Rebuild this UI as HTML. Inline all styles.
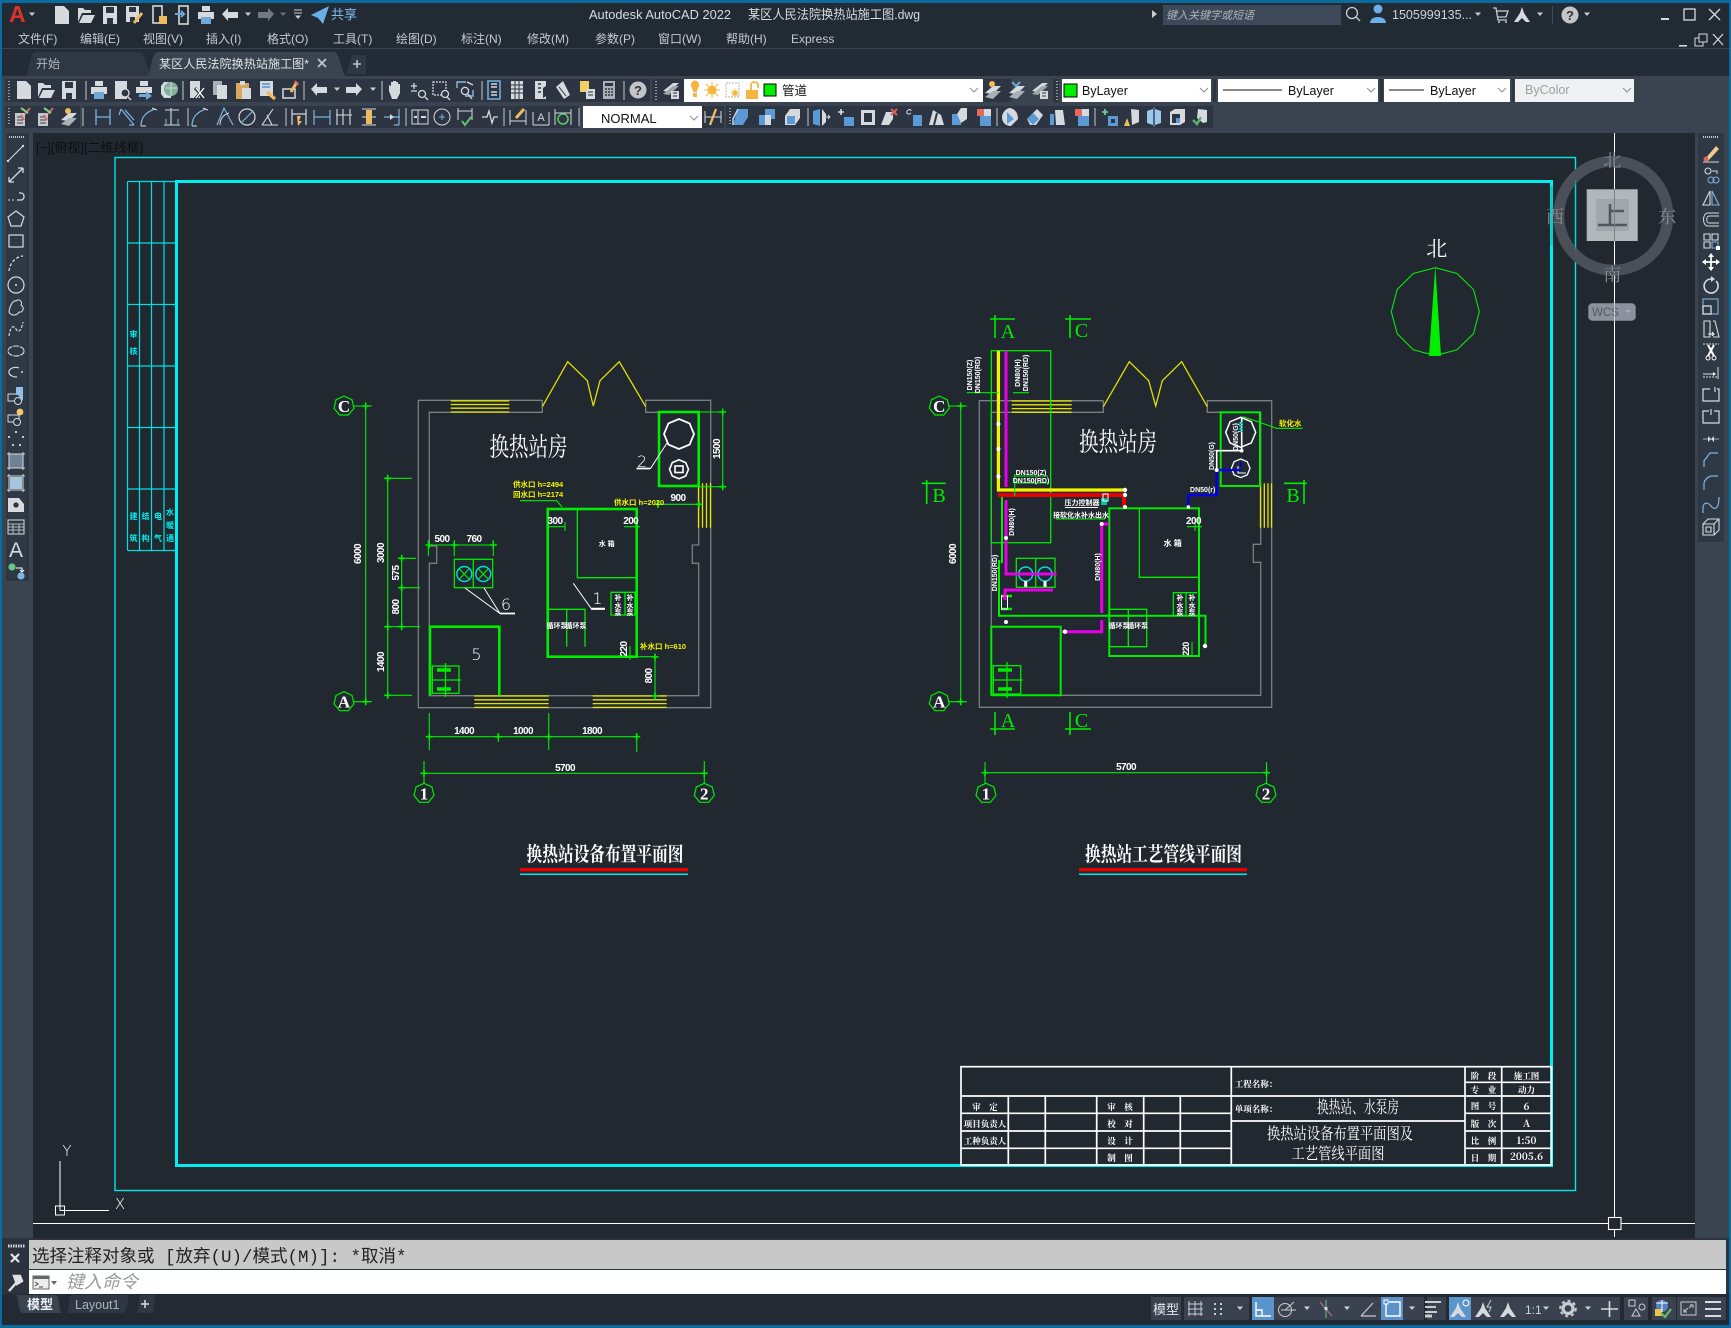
<!DOCTYPE html>
<html lang="zh"><head><meta charset="utf-8"><title>AutoCAD 2022</title>
<style>
html,body{margin:0;padding:0;background:#212830;overflow:hidden}
svg{display:block}
text{font-family:"Liberation Sans","Noto Sans CJK SC",sans-serif}
.m{font-size:12px;fill:#c6cacf}
.d{font-size:10px;fill:#fff;text-anchor:middle;font-weight:bold;letter-spacing:-.6px}
.s{font-size:7px;fill:#fff;text-anchor:middle;font-weight:bold}
.y{font-size:7.5px;fill:#f4f400;font-weight:bold}
.h{fill:#fff;text-anchor:middle;font-family:"Noto Serif CJK SC","Noto Sans CJK SC",serif;font-weight:400}
.t{font-size:8.5px;fill:#fff;text-anchor:middle;font-weight:bold;font-family:"Noto Serif CJK SC",serif}
.c{font-size:17px;fill:#fff;text-anchor:middle;font-family:"Liberation Serif",serif;font-weight:bold}
.n{font-size:16px;fill:#fff;text-anchor:middle;font-family:"DejaVu Sans",sans-serif;font-weight:200}
.u{font-size:15px;fill:#fff;text-anchor:middle;font-family:"DejaVu Sans",sans-serif;font-weight:200}
.g{fill:none;stroke:#00ec00}
.w{fill:none;stroke:#7c7f82;stroke-width:1.3}
</style></head><body>
<svg xmlns="http://www.w3.org/2000/svg" width="1731" height="1328" viewBox="0 0 1731 1328">
<defs>
<path id="tk" d="M-3.5 0H3.5M0-3.5V3.5" stroke="#00ec00" stroke-width="1.6" fill="none"/>
<polygon id="bub" points="0,-10 8,-6.2 10,2.2 4.4,9 -4.4,9 -10,2.2 -8,-6.2" fill="none" stroke="#00ec00" stroke-width="1.2"/>
<path id="dd" d="M-3-1.5H3L0 2Z" fill="#c9cdd2"/>
<path id="chev" d="M-4-2L0 2L4-2" fill="none" stroke="#8b8f94"/>
<g id="new"><path d="M-7-9H2L7-4V9H-7Z" fill="#d6dade"/></g>
<g id="open"><path d="M-8 7V-7H-3L-1-5H5V-2H-4L-8 7ZM-7 8L-3 0H9L5 8Z" fill="#d6dade"/></g>
<g id="save"><path d="M-7-9H7V9H-7Z" fill="#d6dade"/><path d="M-4-8H4V-2H-4ZM-3 3H3V9H-3Z" fill="#2c3541"/></g>
<g id="saveas"><path d="M-7-9H6V7H-7Z" fill="#d6dade"/><path d="M-4-8H3V-3H-4ZM-3 2H2V7H-3Z" fill="#2c3541"/><path d="M1 8L9-2" stroke="#eebc5c" stroke-width="3"/></g>
<g id="print"><path d="M-4-9H4V-4H-4ZM-8-3H8V4H-8Z" fill="#d6dade"/><rect x="-5" y="2" width="10" height="7" fill="#6ea9d9"/></g>
<g id="phone"><rect x="-5" y="-9" width="9" height="17" fill="none" stroke="#d6dade" stroke-width="1.6"/><rect x="1" y="1" width="8" height="8" fill="#eebc5c"/></g>
<g id="upl"><rect x="-4" y="-9" width="9" height="18" fill="none" stroke="#d6dade" stroke-width="1.6"/><path d="M-8-1H1M-2-4L1-1L-2 2" stroke="#6ea9d9" stroke-width="2" fill="none"/></g>
<g id="undo"><path d="M-8-1L-2-7V-3H8V3H-2V6Z" fill="#d6dade"/></g>
<g id="redo"><path d="M8-1L2-7V-3H-8V3H2V6Z" fill="#d6dade"/></g>
<g id="prev"><path d="M-7-9H5V9H-7Z" fill="#d6dade"/><circle cx="3" cy="3" r="4" fill="#2c3541" stroke="#d6dade" stroke-width="1.3"/><path d="M5 6L9 10" stroke="#d6dade" stroke-width="1.4"/></g>
<g id="plot"><path d="M-4-9H4V-4H-4ZM-8-3H8V3H-8Z" fill="#d6dade"/><path d="M-5 4H2V1L8 6L2 10V7H-5Z" fill="#6ea9d9"/></g>
<g id="globe"><path d="M-5-8H2V8H-5L-8 4V-4Z" fill="#d6dade"/><circle cx="2" cy="-1" r="7" fill="#7fb09b"/><path d="M-3-2H8M2-8V6" stroke="#d6dade"/></g>
<g id="cut"><path d="M-7-9H3V8H-7Z" fill="#d6dade"/><path d="M-2-2L8 9M8-2L-2 9" stroke="#2c3541" stroke-width="3"/><path d="M-1-2L7 8M7-2L-1 8" stroke="#fff" stroke-width="1.3"/></g>
<g id="copy"><path d="M-7-9H2V5H-7Z" fill="#aab0b6"/><path d="M-3-5H7V9H-3Z" fill="#d6dade"/></g>
<g id="paste"><path d="M-7-7H6V9H-7Z" fill="#d6a85c"/><rect x="-3" y="-9" width="5" height="4" fill="#d6dade"/><path d="M-1-2H8V9H-1Z" fill="#d6dade"/></g>
<g id="match"><path d="M-7-9H6V6H-7Z" fill="#d6dade"/><path d="M-5-6H3M-5-3H3" stroke="#6ea9d9" stroke-width="2"/><path d="M0 2L8 9" stroke="#eebc5c" stroke-width="3.4"/></g>
<g id="block"><path d="M-7-1H5V8H-7Z" fill="none" stroke="#d6dade" stroke-width="1.5"/><path d="M1 2L7-8" stroke="#eebc5c" stroke-width="3"/><path d="M5-9L8-5" stroke="#e96a6a" stroke-width="2"/></g>
<g id="pan"><path d="M-6 1V-5L-4-4V-8H-2V-3V-9H1V-3V-8H3V-3V-6H5V3L2 9H-3Z" fill="#d6dade"/></g>
<g id="zr"><path d="M-8-4H-2M-5-7V-1M-8 1H-2" stroke="#d6dade" stroke-width="1.3" fill="none"/><circle cx="3" cy="4" r="3.5" fill="none" stroke="#d6dade" stroke-width="1.3"/><path d="M6 7L9 10" stroke="#d6dade" stroke-width="1.3"/></g>
<g id="zw"><path d="M-8-8H5V5H-8Z" fill="none" stroke="#d6dade" stroke-dasharray="2 1" stroke-width="1.3"/><circle cx="4" cy="4" r="3.5" fill="#2c3541" stroke="#d6dade" stroke-width="1.3"/><path d="M6 7L9 10" stroke="#d6dade" stroke-width="1.3"/></g>
<g id="zp"><path d="M-8-2V-8H1M8 0V6H0" fill="none" stroke="#8fb9dd" stroke-width="1.4"/><circle cx="0" cy="1" r="3.6" fill="none" stroke="#d6dade" stroke-width="1.3"/><path d="M3 4L7 9" stroke="#d6dade" stroke-width="1.3"/><path d="M2-8L8-5" stroke="#d6dade" stroke-width="1.3"/></g>
<g id="props"><rect x="-6" y="-9" width="12" height="18" fill="none" stroke="#6ea9d9" stroke-width="1.6"/><path d="M-3-6H3M-3-3H3M-3 2H3M-3 5H3" stroke="#d6dade" stroke-width="1.5"/></g>
<g id="grid3"><path d="M-6-9H6V9H-6Z" fill="#d6dade"/><path d="M-2-9V9M2-9V9M-6-5H6M-6-1H6M-6 3H6" stroke="#2c3541"/></g>
<g id="tp"><path d="M-6-9H5V9H-6Z" fill="#d6dade"/><path d="M-3-6H0M-3-2H0M-3 2H0" stroke="#2c3541" stroke-width="1.6"/><path d="M2-2L8-6L7 5L2 8Z" fill="#2c3541"/></g>
<g id="sheet"><path d="M-7-3L0-9L7 5L1 9Z" fill="#d6dade"/><path d="M-4-3L3 6" stroke="#2c3541"/></g>
<g id="mk"><rect x="-7" y="-9" width="9" height="11" fill="#f0cf63"/><rect x="-1" y="-1" width="9" height="10" fill="#d6dade"/><path d="M1 2H6M1 5H6" stroke="#2c3541"/></g>
<g id="calc"><rect x="-6" y="-9" width="12" height="18" fill="#aab0b6"/><rect x="-4" y="-7" width="8" height="3" fill="#2c3541"/><path d="M-4-1H4M-4 2H4M-4 5H4" stroke="#2c3541" stroke-width="1.6" stroke-dasharray="2 1"/></g>
<g id="help"><circle r="8.5" fill="#c2c6ca"/><text x="0" y="5" font-size="13" font-weight="bold" text-anchor="middle" fill="#333">?</text></g>
<g id="lay"><path d="M-8 1L2-7L8-7L-2 2Z" fill="#d6dade"/><path d="M-8 4L2-4L8-4L-2 5Z" fill="#9fa5ab"/><rect x="0" y="1" width="8" height="8" fill="#d6dade"/><path d="M2 3H6M2 6H6" stroke="#2c3541"/></g>
<g id="lay2"><path d="M-8 3L0-4H8L0 4Z" fill="#d6dade"/><path d="M-8 7L0 1H8L0 9Z" fill="#aab0b6"/><circle cx="-1" cy="-6" r="3" fill="#eebc5c"/></g>
<g id="lay3"><path d="M-8 3L0-4H8L0 4Z" fill="#d6dade"/><path d="M-8 7L0 1H8L0 9Z" fill="#aab0b6"/><path d="M-5-8L-1-4L3-8" fill="none" stroke="#6ea9d9" stroke-width="2"/></g>
<g id="sv"><rect x="-8" y="-4" width="10" height="13" fill="#c4c8cc"/><path d="M-6 0H0M-6 3H0M-6 6H0" stroke="#444"/><path d="M2-3L7-9M-2-2L1 3" stroke="#d66" stroke-width="2"/><path d="M-2-9L5-4" stroke="#8c8" stroke-width="2"/></g>
<g id="dl"><path d="M-7-8V8M7-8V8M-7 0H7" stroke="#7eb3e0" stroke-width="1.3" fill="none"/></g>
<g id="da"><path d="M-6-8L7 8M-6-8L-8-2M2 8L7 8M-2-7L7 3" stroke="#7eb3e0" stroke-width="1.2" fill="none"/></g>
<g id="dar"><path d="M-8 9C-8 0-3-5 6-8" stroke="#7eb3e0" stroke-width="1.3" fill="none"/><path d="M-3 9H-8M3-9L8-7" stroke="#d6dade" stroke-width="1"/></g>
<g id="dor"><path d="M-7-7H7M-1-9V8M-8 8H8" stroke="#d6dade" stroke-width="1.1" fill="none"/><path d="M-6 8V2M6 8V2" stroke="#7eb3e0"/></g>
<g id="ddia"><path d="M-8 8L-1-9L8 8" stroke="#7eb3e0" fill="none" stroke-width="1.2"/><path d="M-5 8C-5 2-2-2 4-4" stroke="#d6dade" fill="none"/></g>
<g id="dcir"><circle r="8" fill="none" stroke="#d6dade" stroke-width="1.2"/><path d="M-6 6L6-6" stroke="#7eb3e0" stroke-width="1.2"/></g>
<g id="dang"><path d="M-8 8H8M-8 8L3-8M-3-2L2 8" stroke="#d6dade" stroke-width="1.1" fill="none"/></g>
<g id="dbar"><path d="M-7-8V8M7-8V8M-7-3H7" stroke="#d6dade" stroke-width="1.2" fill="none"/><path d="M-2-1L2-1L0 4L3 4L-1 9Z" fill="#eebc5c"/></g>
<g id="dbase"><path d="M-8-7V8M8-7V8M-8 0H8" stroke="#7eb3e0" fill="none" stroke-width="1.2"/></g>
<g id="dcon"><path d="M-7-8V8M-1-8V8M6-8V8M-8-2H8" stroke="#d6dade" fill="none" stroke-width="1.1"/></g>
<g id="dsp"><path d="M-7-8H7M-7 8H7M-7 0H7" stroke="#d6dade"/><rect x="-3" y="-7" width="6" height="14" fill="#eebc5c"/></g>
<g id="dbrk"><path d="M-8 0H8M7-8V8M2 8H7" stroke="#7eb3e0" fill="none" stroke-width="1.2"/><path d="M-2-3L2 0L-2 3Z" fill="#d6dade"/></g>
<g id="tol"><rect x="-8" y="-7" width="16" height="14" fill="none" stroke="#d6dade"/><path d="M-2-7V7" stroke="#d6dade"/><path d="M-6 0H-3M1 0H6" stroke="#d6dade" stroke-width="2"/></g>
<g id="cen"><circle r="8" fill="none" stroke="#d6dade"/><path d="M-3 0H3M0-3V3" stroke="#7eb3e0"/></g>
<g id="insp"><path d="M-7-9V3M7-9V3M-7-6H7" stroke="#d6dade" fill="none"/><path d="M-3 4L0 8L6 0" stroke="#5fc16a" stroke-width="2" fill="none"/></g>
<g id="jog"><path d="M-8 0H-3L-1-6L2 6L4 0H8" stroke="#d6dade" fill="none" stroke-width="1.3"/></g>
<g id="ed"><path d="M-8-7V8M8-7V8M-8 4H8" stroke="#d6dade" fill="none"/><path d="M-2 1L6-8" stroke="#eebc5c" stroke-width="3"/></g>
<g id="ea"><path d="M-8-5V8M8-5V8M-8 8H8" stroke="#d6dade" fill="none"/><text x="0" y="4" font-size="11" text-anchor="middle" fill="#d6dade">A</text></g>
<g id="upd"><path d="M-8-8V8M8-8V8M-8-4H8" stroke="#d6dade" fill="none"/><circle cy="2" r="5" fill="none" stroke="#5fc16a" stroke-width="1.6"/></g>
<g id="dst"><path d="M-8 0H8M-8-6V6M8-6V6" stroke="#d6dade"/><path d="M-3 8L3-8" stroke="#eebc5c" stroke-width="2.4"/></g>
<g id="cube"><path d="M-8 8L-3-8H7L7 0L2 8Z" fill="#5b9ad5"/><path d="M-3-8L-8 2L-8 8" stroke="#bcd7ef" stroke-width="1.5" fill="none"/></g>
<g id="cube2"><path d="M-8-2H-2V8H-8ZM-2-8H8V2H-2Z" fill="#5b9ad5"/><path d="M-2-2H4V8H-2Z" fill="#d6dade"/></g>
<g id="cube3"><path d="M-7-1L-2-8H8V1L3 8H-7Z" fill="#d6dade"/><rect x="-5" y="-1" width="8" height="8" fill="#5b9ad5"/></g>
<g id="mir"><path d="M-8 7V-6L-1-8V9Z" fill="#5b9ad5"/><path d="M1-8L5-3V5L1 9Z" fill="#d6dade"/><path d="M4 0H9M7-2L9 0L7 2" stroke="#d6dade" fill="none"/></g>
<g id="mv"><path d="M-8-5H-2M-5-8V-2" stroke="#d6dade" stroke-width="1.6"/><rect x="-2" y="0" width="10" height="9" fill="#5b9ad5"/></g>
<g id="rect3"><rect x="-7" y="-7" width="14" height="15" fill="#d6dade"/><rect x="-4" y="-4" width="8" height="9" fill="#2c3541"/></g>
<g id="cubx"><path d="M-8 8L-3-5H4V2L0 8Z" fill="#d6dade"/><path d="M2-8L8-2M8-8L2-2" stroke="#e5605b" stroke-width="2"/></g>
<g id="cubc"><path d="M-1-2H8V9H-1Z" fill="#5b9ad5"/><path d="M-7-6C-5-8-3-8-3-6M-7-6C-8-3-5-2-3-4" stroke="#d6dade" fill="none"/></g>
<g id="fold"><path d="M-7 8L-3-7L5-2L8 8Z" fill="#d6dade"/><path d="M-2 8L1-4" stroke="#2c3541" stroke-width="2"/></g>
<g id="cubs"><rect x="-7" y="-3" width="9" height="11" fill="#5b9ad5"/><path d="M-2-3L2-9H8V2L2 6Z" fill="#d6dade"/></g>
<g id="sq2"><rect x="-6" y="-8" width="7" height="7" fill="#e46a5e"/><rect x="1" y="-8" width="7" height="7" fill="#d6dade"/><rect x="-3" y="-1" width="11" height="10" fill="#5b9ad5"/></g>
<g id="solid"><path d="M-8 0C-8-5-3-9 0-9C5-8 8-4 8 2L1 9C-5 9-8 5-8 0Z" fill="#d6dade"/><path d="M-3 7V-5L4 2Z" fill="#5b9ad5"/></g>
<g id="rub"><path d="M-8 2L2-8L8-2L1 8H-5Z" fill="#d6dade"/><path d="M-8 2L-2-4L4 2L-2 8Z" fill="#5b9ad5"/></g>
<g id="soln"><path d="M-2-7H6L8 8H-1Z" fill="#d6dade"/><rect x="-7" y="-3" width="4" height="11" fill="#5b9ad5"/></g>
<g id="addb"><path d="M-8-5H-2M-5-8V-2" stroke="#70c39b" stroke-width="1.8"/><rect x="-2" y="-1" width="10" height="10" fill="#5b9ad5"/><rect x="1" y="2" width="4" height="4" fill="#2c3541"/></g>
<g id="brm"><path d="M-1-8L7-7V5L0 8Z" fill="#d6dade"/><path d="M-8 9L-5 1L-2 9Z" fill="#eebc5c"/></g>
<g id="twin"><path d="M-7-6L-1-8V8L-7 6ZM1-8L7-6V6L1 8Z" fill="#9ec8ea"/><path d="M0-10V10" stroke="#5b9ad5"/></g>
<g id="cub4"><path d="M-7-5L-2-8H8V5L3 8H-7Z" fill="#d6dade"/><rect x="-5" y="-3" width="8" height="9" fill="#2c3541"/><rect x="-1" y="1" width="4" height="5" fill="#5b9ad5"/></g>
<g id="chk"><path d="M-2-8L7-7V5L3 6L-3 1Z" fill="#d6dade"/><path d="M-7 3L-3 7L1 0" stroke="#55b56a" stroke-width="2.4" fill="none"/></g>
<g id="pin"><path d="M-4-5C-4-11 4-11 4-5C4-2 2-1 2 2H-2C-2-1-4-2-4-5Z" fill="#f4b640"/><rect x="-2" y="3" width="4" height="4" fill="#f4b640"/></g>
<g id="sun"><circle r="4.5" fill="#f4b640"/><path d="M-8 0H8M0-8V8M-6-6L6 6M-6 6L6-6" stroke="#f4b640"/></g>
<g id="lk"><rect x="-6" y="-1" width="12" height="9" fill="#f4b640"/><path d="M-1-1V-6C-1-10 6-10 6-6V-3" stroke="#f4b640" stroke-width="1.8" fill="none"/></g>
<g id="wL"><path d="M-8 8L7-7" stroke="#d6dade" stroke-width="1.1"/><circle cx="-8" cy="8" r="1.2" fill="#d6dade"/><circle cx="7" cy="-7" r="1.2" fill="#d6dade"/></g>
<g id="wX"><path d="M-7 7L7-7M-7 7V2M-7 7H-2M7-7V-2M7-7H2" stroke="#d6dade" stroke-width="1.3" fill="none"/></g>
<g id="wP"><path d="M-8 3H-1" stroke="#d6dade" stroke-dasharray="2 2"/><path d="M1 3H5C9 3 9-4 5-4H3" stroke="#d6dade" stroke-width="1.3" fill="none"/></g>
<g id="wG"><path d="M0-8L8-2L5 7H-5L-8-2Z" stroke="#d6dade" stroke-width="1.2" fill="none"/></g>
<g id="wR"><rect x="-7" y="-6" width="14" height="12" stroke="#d6dade" stroke-width="1.2" fill="none"/></g>
<g id="wA"><path d="M-7 8C-6 0-1-6 7-7" stroke="#d6dade" stroke-width="1.3" stroke-dasharray="3 2" fill="none"/></g>
<g id="wC"><circle r="8" stroke="#d6dade" stroke-width="1.2" fill="none"/><circle r="1" fill="#d6dade"/></g>
<g id="wV"><path d="M-7 5C-6-3-2-7 0-6C3-9 7-5 5-2C9 0 7 6 3 5C1 9-5 9-7 5Z" stroke="#d6dade" stroke-width="1.1" fill="none"/></g>
<g id="wS"><path d="M-7 7C-6-1-3-5 0 0C2 4 5 3 7-7" stroke="#d6dade" stroke-width="1.2" stroke-dasharray="3 1.5" fill="none"/></g>
<g id="wE"><ellipse rx="8" ry="5" stroke="#d6dade" stroke-width="1.1" stroke-dasharray="6 1" fill="none"/></g>
<g id="wEa"><path d="M3-5C-2-7-8-4-7 0C-6 3-2 4 1 4" stroke="#d6dade" stroke-width="1.2" fill="none"/><circle cx="6" cy="-1" r="1" fill="#d6dade"/></g>
<g id="wI"><rect x="-8" y="-2" width="12" height="7" fill="none" stroke="#d6dade"/><circle cx="2" cy="5" r="3.5" fill="#2c3541" stroke="#d6dade"/><path d="M0-9H7V5L2-1H0Z" fill="#8fc0ea"/></g>
<g id="wB"><rect x="-8" y="-2" width="11" height="7" fill="none" stroke="#d6dade"/><circle cx="1" cy="5" r="3.5" fill="#2c3541" stroke="#d6dade"/><circle cx="4" cy="-5" r="3.4" fill="#f0cb66"/></g>
<g id="wD"><circle cx="-7" cy="-3" r="1.1" fill="#d6dade"/><circle cy="-8" r="1.1" fill="#d6dade"/><circle cx="7" cy="-3" r="1.1" fill="#d6dade"/><circle cx="-3" cy="5" r="1.1" fill="#d6dade"/><circle cx="4" cy="5" r="1.1" fill="#d6dade"/></g>
<g id="wH"><rect x="-7" y="-7" width="14" height="14" fill="#6f8294" stroke="#d6dade"/><path d="M-9-7H9M-9 7H9M-7-9V9M7-9V9" stroke="#d6dade"/></g>
<g id="wGr"><rect x="-6" y="-6" width="12" height="12" fill="#a8c4dc"/><path d="M-9-7H9M-9 7H9M-7-9V9M7-9V9" stroke="#d6dade"/></g>
<g id="wRg"><path d="M-8-7H3L8-1V7H-8Z" fill="#d6dade"/><circle cx="0" cy="0" r="2.6" fill="#333"/></g>
<g id="wT"><rect x="-8" y="-7" width="16" height="14" fill="none" stroke="#d6dade"/><path d="M-8-3H8M-8 0H8M-8 3H8M-3-3V7M3-3V7" stroke="#d6dade" stroke-width=".8"/></g>
<g id="wAt"><circle cx="-4" cy="-3" r="3.6" fill="#63c783"/><circle cx="5" cy="6" r="3.6" fill="#7db4e2"/><path d="M0-2H6V2M4 0L6 2L8 0" stroke="#fff" fill="none"/></g>
<g id="rP"><path d="M-6 6L5-7L8-4L-3 8Z" fill="#f0cb8e"/><circle cx="-5" cy="6" r="2.4" fill="#e5605b"/><path d="M-8 9H8" stroke="#d6dade"/></g>
<g id="rC"><circle cx="-3" cy="-4" r="3" fill="none" stroke="#d6dade" stroke-width="1.1"/><path d="M1-4H6V-1" stroke="#d6dade" fill="none"/><circle cx="0" cy="5" r="3" fill="none" stroke="#7eb3e0"/><circle cx="5" cy="5" r="3" fill="none" stroke="#7eb3e0"/></g>
<g id="rM"><path d="M-1-7V7H-8Z" stroke="#d6dade" stroke-width="1.1" fill="none"/><path d="M1-7V7H8Z" stroke="#7eb3e0" stroke-width="1.1" fill="none"/></g>
<g id="rO"><path d="M8-6H-3C-9-6-9 7-3 7H8M8-3H-2C-5-3-5 4-2 4H8" stroke="#d6dade" fill="none" stroke-width="1"/></g>
<g id="rAr"><path d="M-7-7H-1V-1H-7ZM1-7H7V-1H1ZM-7 1H-1V7H-7Z" fill="none" stroke="#d6dade" stroke-width="1.1"/><rect x="1" y="1" width="6" height="6" fill="none" stroke="#7eb3e0"/><rect x="5" y="5" width="4" height="4" fill="#fff"/></g>
<g id="rMv"><path d="M0-8V8M-8 0H8" stroke="#fff" stroke-width="1.7"/><path d="M0-9L-3-5H3ZM0 9L-3 5H3ZM-9 0L-5-3V3ZM9 0L5-3V3Z" fill="#fff"/></g>
<g id="rRo"><path d="M5-5A7 7 0 1 1 0-7" stroke="#d6dade" stroke-width="1.6" fill="none"/><path d="M0-10V-4L4-7Z" fill="#d6dade"/></g>
<g id="rSc"><rect x="-8" y="-8" width="15" height="15" fill="none" stroke="#7eb3e0" stroke-width="1.1"/><rect x="-8" y="-1" width="8" height="8" fill="none" stroke="#d6dade" stroke-width="1.3"/></g>
<g id="rSt"><path d="M-7-8H-1V8H-7ZM2-8H4L8 8H2" fill="none" stroke="#d6dade" stroke-width="1.1"/><path d="M-3 5H3M1 3L3 5L1 7" stroke="#fff" fill="none"/></g>
<g id="rTr"><path d="M-8-8H8" stroke="#d6dade" stroke-dasharray="2 1"/><path d="M-3-7L3 4M3-7L-3 4" stroke="#fff" stroke-width="2"/><circle cx="-3" cy="6" r="2" fill="none" stroke="#fff"/><circle cx="3" cy="6" r="2" fill="none" stroke="#fff"/></g>
<g id="rEx"><path d="M-8 1H3M7-6V6" stroke="#d6dade"/><path d="M-8 4H6" stroke="#d6dade" stroke-dasharray="2 1"/><path d="M2-1L5 1L2 3Z" fill="#fff"/></g>
<g id="rBr"><path d="M-1-6H-8V6H8V-6H6M4-8V-3" stroke="#d6dade" stroke-width="1.2" fill="none"/></g>
<g id="rB2"><path d="M-2-6H-8V6H8V-6H3M0-8V-2" stroke="#d6dade" stroke-width="1.2" fill="none"/></g>
<g id="rJn"><path d="M-8 0H8" stroke="#7eb3e0"/><path d="M-3-3L0 0L-3 3ZM3-3L0 0L3 3Z" fill="#d6dade"/></g>
<g id="rCh"><path d="M-7 7V1L-1-7H7" stroke="#7eb3e0" stroke-width="1.2" fill="none"/></g>
<g id="rFi"><path d="M-7 7V0C-6-4-3-6 0-7H7" stroke="#7eb3e0" stroke-width="1.2" fill="none"/></g>
<g id="rBl"><path d="M-8 8V3C-8-3-3-3 0 1C3 5 8 5 8-8" stroke="#7eb3e0" stroke-width="1.2" fill="none"/></g>
<g id="r3D"><path d="M-8-3H3V8H-8ZM-8-3L-3-8H8V3L3 8M3-3L8-8M-5 0H0V5H-5Z" stroke="#d6dade" fill="none" stroke-width="1.1"/></g>
<g id="sm"><path d="M0-8L2-2L8 7H4L0 3L-4 7H-8L-2-2Z" fill="#d6dade"/></g>
</defs>

<!-- chrome backgrounds -->
<rect width="1731" height="1328" fill="#26303b"/>
<rect width="1731" height="3" fill="#0c6b9e"/>
<rect y="3" width="1731" height="45" fill="#222a34"/>
<rect y="48" width="1731" height="1" fill="#3a4450"/>
<rect y="49" width="1731" height="27" fill="#232b36"/>
<rect y="76" width="1731" height="57" fill="#3a4451"/>
<rect y="133" width="33" height="1105" fill="#3a4451"/>
<rect x="1695" y="133" width="36" height="1105" fill="#3a4451"/>
<rect x="33" y="133" width="1662" height="1105" fill="#212830"/>
<rect y="1238" width="1731" height="90" fill="#2b333f"/>
<rect y="1294" width="1731" height="31" fill="#232a34"/>
<rect y="3" width="2" height="1325" fill="#0c6b9e"/>
<rect x="1729" y="3" width="2" height="1325" fill="#0c6b9e"/>
<rect y="1325" width="1731" height="3" fill="#0c6b9e"/>

<!-- title bar -->
<text x="9" y="22" font-size="23" font-weight="bold" fill="#d8342c">A</text><use href="#dd" x="32" y="14"/>
<use href="#new" x="62" y="15"/><use href="#open" x="86" y="15"/><use href="#save" x="110" y="15"/><use href="#saveas" x="133" y="15"/><use href="#phone" x="158" y="15"/><use href="#upl" x="183" y="15"/><use href="#print" x="206" y="15"/><use href="#undo" x="230" y="15"/><use href="#dd" x="248" y="14"/><g opacity=".45"><use href="#redo" x="266" y="15"/><use href="#dd" x="283" y="14"/></g>
<path d="M294 10H302M294 13H302" stroke="#c9cdd2"/><use href="#dd" x="298" y="17"/>
<path d="M311 15L329 6L323 24L318 18Z" fill="#6ab0e6"/><text x="331" y="19" font-size="13" fill="#7fbdee">共享</text>
<text x="589" y="19" font-size="13" fill="#d8dbdf" textLength="142" lengthAdjust="spacingAndGlyphs">Autodesk AutoCAD 2022</text>
<text x="748" y="19" font-size="13" fill="#d8dbdf" textLength="172" lengthAdjust="spacingAndGlyphs">某区人民法院换热站施工图.dwg</text>
<path d="M1152 10L1157 14L1152 18Z" fill="#c9cdd2"/>
<rect x="1163" y="5" width="178" height="20" fill="#3d4858"/>
<text x="1166" y="19" font-size="11" font-style="italic" fill="#aeb3ba">键入关键字或短语</text>
<circle cx="1352" cy="13" r="5.5" fill="none" stroke="#c9cdd2" stroke-width="1.3"/><path d="M1356 17L1360 21" stroke="#c9cdd2" stroke-width="1.3"/>
<circle cx="1378" cy="9" r="4.5" fill="#6cb0ea"/><path d="M1370 23C1370 15 1386 15 1386 23Z" fill="#6cb0ea"/>
<text x="1392" y="19" font-size="13" fill="#d0d3d7" textLength="80" lengthAdjust="spacingAndGlyphs">1505999135...</text><use href="#dd" x="1478" y="14"/>
<path d="M1493 8H1496L1498 20H1507M1497 11H1508L1506 17H1498" stroke="#c9cdd2" fill="none" stroke-width="1.3"/><circle cx="1499" cy="22" r="1" fill="#c9cdd2"/><circle cx="1506" cy="22" r="1" fill="#c9cdd2"/>
<use href="#sm" x="1522" y="15"/><use href="#dd" x="1540" y="14"/><rect x="1552" y="6" width="1" height="18" fill="#414b58"/>
<use href="#help" x="1570" y="15"/><use href="#dd" x="1587" y="14"/>
<rect x="1661" y="18" width="8" height="2" fill="#d8dbdf"/><rect x="1684" y="9" width="11" height="11" fill="none" stroke="#d8dbdf" stroke-width="1.3"/><path d="M1709 9L1720 20M1720 9L1709 20" stroke="#d8dbdf" stroke-width="1.3"/>
<!-- menu -->
<text class="m" x="18" y="43">文件(F)</text><text class="m" x="80" y="43">编辑(E)</text><text class="m" x="143" y="43">视图(V)</text><text class="m" x="206" y="43">插入(I)</text><text class="m" x="267" y="43">格式(O)</text><text class="m" x="333" y="43">工具(T)</text><text class="m" x="396" y="43">绘图(D)</text><text class="m" x="461" y="43">标注(N)</text><text class="m" x="527" y="43">修改(M)</text><text class="m" x="595" y="43">参数(P)</text><text class="m" x="658" y="43">窗口(W)</text><text class="m" x="726" y="43">帮助(H)</text><text class="m" x="791" y="43">Express</text>
<rect x="1679" y="45" width="8" height="1.6" fill="#d8dbdf"/><rect x="1695" y="38" width="8" height="8" fill="none" stroke="#d8dbdf"/><rect x="1699" y="34" width="8" height="8" fill="#222a34" stroke="#d8dbdf"/><path d="M1713 34L1723 45M1723 34L1713 45" stroke="#d8dbdf" stroke-width="1.2"/>
<!-- tabs -->
<path d="M25 76C30 76 28 52 36 52H140C146 52 146 70 152 76Z" fill="#2e3743"/>
<path d="M146 76C152 76 150 52 158 52H334C340 52 340 70 346 76Z" fill="#3a4451"/>
<text x="36" y="68" font-size="12" fill="#b2b7bd">开始</text>
<text x="159" y="68" font-size="12" fill="#dfe2e5" textLength="150" lengthAdjust="spacingAndGlyphs">某区人民法院换热站施工图*</text>
<path d="M318 59L326 67M326 59L318 67" stroke="#bfc4c9" stroke-width="1.8"/>
<path d="M352 55H366V74H346Z" fill="#2e3743"/><path d="M353 64H361M357 60V68" stroke="#bfc4c9" stroke-width="1.6"/>

<!-- toolbar 1 -->
<rect x="5" y="79" width="645" height="23" fill="#2c3541"/><rect x="652" y="79" width="360" height="23" fill="#2c3541"/><rect x="1053" y="79" width="6" height="23" fill="#2c3541"/>
<path d="M9 81V100M656 81V100M1057 81V100" stroke="#98a0a8" stroke-width="2" stroke-dasharray="1 2"/>
<path d="M86 81V100M183 81V100M304 81V100M382 81V100M482 81V100M624 81V100" stroke="#c5c9cd"/>
<use href="#new" x="24" y="90"/><use href="#open" x="46" y="90"/><use href="#save" x="69" y="90"/><use href="#print" x="99" y="90"/><use href="#prev" x="122" y="90"/><use href="#plot" x="144" y="90"/><use href="#globe" x="169" y="90"/><use href="#cut" x="197" y="90"/><use href="#copy" x="220" y="90"/><use href="#paste" x="243" y="90"/><use href="#match" x="267" y="90"/><use href="#block" x="290" y="90"/><use href="#undo" x="319" y="90"/><use href="#dd" x="337" y="89"/><use href="#redo" x="354" y="90"/><use href="#dd" x="373" y="89"/><use href="#pan" x="395" y="90"/><use href="#zr" x="419" y="90"/><use href="#zw" x="441" y="90"/><use href="#zp" x="465" y="90"/><use href="#props" x="494" y="90"/><use href="#grid3" x="517" y="90"/><use href="#tp" x="541" y="90"/><use href="#sheet" x="563" y="90"/><use href="#mk" x="587" y="90"/><use href="#calc" x="609" y="90"/><use href="#help" x="638" y="90"/><use href="#lay" x="671" y="90"/>
<rect x="684" y="79" width="299" height="23" fill="#fff"/>
<use href="#pin" x="695" y="90"/><use href="#sun" x="712" y="90"/><path d="M726 83H739V97H726Z" fill="none" stroke="#b8b8b8" stroke-dasharray="2 1"/><use href="#sun" transform="translate(735 93) scale(.6)"/><use href="#lk" x="752" y="91"/>
<rect x="764" y="84" width="12" height="12" fill="#00ee00" stroke="#000"/><text x="782" y="95" font-size="12.5" fill="#111">管道</text><use href="#chev" x="974" y="90"/>
<use href="#lay2" x="993" y="90"/><use href="#lay3" x="1017" y="90"/><use href="#lay" x="1040" y="90"/>
<rect x="1062" y="79" width="149" height="23" fill="#fff"/><rect x="1064" y="84" width="13" height="13" fill="#00ee00" stroke="#000"/><text x="1082" y="95" font-size="12.5" fill="#111">ByLayer</text><use href="#chev" x="1204" y="90"/>
<rect x="1213" y="79" width="3" height="23" fill="#2c3541"/>
<rect x="1218" y="79" width="160" height="23" fill="#fff"/><path d="M1223 90H1282" stroke="#111"/><text x="1288" y="95" font-size="12.5" fill="#111">ByLayer</text><use href="#chev" x="1371" y="90"/>
<rect x="1380" y="79" width="3" height="23" fill="#2c3541"/>
<rect x="1384" y="79" width="126" height="23" fill="#fff"/><path d="M1389 90H1424" stroke="#111"/><text x="1430" y="95" font-size="12.5" fill="#111">ByLayer</text><use href="#chev" x="1502" y="90"/>
<rect x="1512" y="79" width="2" height="23" fill="#2c3541"/>
<rect x="1515" y="79" width="119" height="23" fill="#eef0f2"/><text x="1525" y="94" font-size="12.5" fill="#9ba0a6">ByColor</text><use href="#chev" x="1627" y="90"/>

<!-- toolbar 2 -->
<rect x="5" y="106" width="75" height="22" fill="#2c3541"/><rect x="82" y="106" width="497" height="22" fill="#2c3541"/><rect x="702" y="106" width="22" height="22" fill="#2c3541"/><rect x="726" y="106" width="487" height="22" fill="#2c3541"/>
<path d="M9 108V126M730 108V126" stroke="#98a0a8" stroke-width="2" stroke-dasharray="1 2"/>
<path d="M83 108V126M188 108V126M286 108V126M406 108V126M504 108V126M579 108V126M808 108V126M997 108V126M1095 108V126" stroke="#c5c9cd"/>
<use href="#sv" x="23" y="117"/><use href="#sv" x="46" y="117"/><use href="#lay2" x="69" y="117"/>
<use href="#dl" x="103" y="117"/><use href="#da" x="127" y="117"/><use href="#dar" x="149" y="117"/><use href="#dor" x="172" y="117"/><use href="#dar" x="200" y="117"/><use href="#ddia" x="225" y="117"/><use href="#dcir" x="247" y="117"/><use href="#dang" x="270" y="117"/><use href="#dbar" x="299" y="117"/><use href="#dbase" x="322" y="117"/><use href="#dcon" x="344" y="117"/><use href="#dsp" x="369" y="117"/><use href="#dbrk" x="392" y="117"/><use href="#tol" x="420" y="117"/><use href="#cen" x="442" y="117"/><use href="#insp" x="465" y="117"/><use href="#jog" x="490" y="117"/><use href="#ed" x="518" y="117"/><use href="#ea" x="541" y="117"/><use href="#upd" x="563" y="117"/>
<rect x="583" y="106" width="119" height="22" fill="#fff"/><text x="601" y="123" font-size="13" fill="#111">NORMAL</text><use href="#chev" x="694" y="118"/><use href="#dst" x="713" y="117"/>
<use href="#cube" x="741" y="117"/><use href="#cube2" x="767" y="117"/><use href="#cube3" x="792" y="117"/><use href="#mir" x="821" y="117"/><use href="#mv" x="846" y="117"/><use href="#rect3" x="868" y="117"/><use href="#cubx" x="889" y="117"/><use href="#cubc" x="914" y="117"/><use href="#fold" x="936" y="117"/><use href="#cubs" x="959" y="117"/><use href="#sq2" x="983" y="117"/><use href="#solid" x="1010" y="117"/><use href="#rub" x="1035" y="117"/><use href="#soln" x="1057" y="117"/><use href="#sq2" x="1081" y="117"/><use href="#addb" x="1110" y="117"/><use href="#brm" x="1132" y="117"/><use href="#twin" x="1154" y="117"/><use href="#cub4" x="1177" y="117"/><use href="#chk" x="1200" y="117"/>

<!-- left toolbar -->
<rect x="7" y="134" width="21" height="446" fill="#2f3946" stroke="#262e38"/><path d="M9 137H24" stroke="#c5c9cd" stroke-width="2" stroke-dasharray="1 1"/>
<use href="#wL" x="16" y="153"/><use href="#wX" x="16" y="175"/><use href="#wP" x="16" y="197"/><use href="#wG" x="16" y="219"/><use href="#wR" x="16" y="241"/><use href="#wA" x="16" y="263"/><use href="#wC" x="16" y="285"/><use href="#wV" x="16" y="307"/><use href="#wS" x="16" y="329"/><use href="#wE" x="16" y="351"/><use href="#wEa" x="16" y="373"/><use href="#wI" x="16" y="396"/><use href="#wB" x="16" y="417"/><use href="#wD" x="16" y="440"/><use href="#wH" x="16" y="461"/><use href="#wGr" x="16" y="483"/><use href="#wRg" x="16" y="505"/><use href="#wT" x="16" y="527"/><text x="16" y="557" font-size="21" text-anchor="middle" fill="#d6dade">A</text><use href="#wAt" x="16" y="570"/>
<!-- right toolbar -->
<rect x="1699" y="134" width="24" height="407" fill="#2f3946" stroke="#262e38"/><path d="M1703 137H1719" stroke="#c5c9cd" stroke-width="2" stroke-dasharray="1 1"/>
<use href="#rP" x="1711" y="153"/><use href="#rC" x="1711" y="175"/><use href="#rM" x="1711" y="198"/><use href="#rO" x="1711" y="219"/><use href="#rAr" x="1711" y="241"/><use href="#rMv" x="1711" y="262"/><use href="#rRo" x="1711" y="286"/><use href="#rSc" x="1711" y="307"/><use href="#rSt" x="1711" y="329"/><use href="#rTr" x="1711" y="352"/><use href="#rEx" x="1711" y="373"/><use href="#rBr" x="1711" y="395"/><use href="#rB2" x="1711" y="417"/><use href="#rJn" x="1711" y="439"/><use href="#rCh" x="1711" y="460"/><use href="#rFi" x="1711" y="483"/><use href="#rBl" x="1711" y="505"/><use href="#r3D" x="1711" y="527"/>

<!-- drawing frames -->
<text x="36" y="152" font-size="13" fill="#0c1014">[−][俯视][二维线框]</text>
<rect x="115" y="157.5" width="1460.5" height="1033" fill="none" stroke="#00e8e8" stroke-width="1.4"/>
<rect x="176.5" y="181.5" width="1375" height="984" fill="none" stroke="#00f0f0" stroke-width="3"/>
<g stroke="#00e0e0" fill="none" stroke-width="1.2"><path d="M127.5 181.5H176M127.5 243H176M127.5 304.5H176M127.5 366H176M127.5 427.5H176M127.5 489H176M127.5 550.5H176M127.5 181.5V550.5M139.5 181.5V550.5M151.5 181.5V550.5M164 181.5V550.5"/></g>
<g font-size="8" fill="#00f0f0" font-weight="bold" text-anchor="middle"><text x="133.5" y="337">审</text><text x="133.5" y="354">核</text><text x="133.5" y="519">建</text><text x="133.5" y="541">筑</text><text x="145.5" y="519">结</text><text x="145.5" y="541">构</text><text x="158" y="519">电</text><text x="158" y="541">气</text><text x="170" y="515">水</text><text x="170" y="528">暖</text><text x="170" y="541">通</text></g>

<!-- LEFT PLAN -->
<g class="w"><path d="M542.3 400.3H418.3V707.7H710.7V400.3H645.7V412.3H698.7V545H692.3V563.3H698.7V695.7H429.3V563.3H436.7V546H429.3V412.3H542.3V400.3"/></g>
<path d="M542.3 406.7L567.7 361.7L587.3 380.7L593.3 406L600 380.7L619.3 361.7L645.7 406.7" fill="none" stroke="#e0e000" stroke-width="1.3"/>
<g stroke="#e6e600" stroke-width="1.3" fill="none"><path d="M450.7 400.8H509.3M450.7 404.5H509.3M450.7 408.2H509.3M450.7 412H509.3M474.3 696H548.7M474.3 699.8H548.7M474.3 703.6H548.7M474.3 707.4H548.7M592.7 696H666.7M592.7 699.8H666.7M592.7 703.6H666.7M592.7 707.4H666.7M698.5 483.3V527.7M702.5 483.3V527.7M706.5 483.3V527.7M710.5 483.3V527.7"/></g>
<g class="g" stroke-width="2.6"><rect x="659" y="412" width="39.7" height="74"/><rect x="547.7" y="509" width="89" height="147.7"/><path d="M430 695.7V626.7H499.3V695.7"/></g>
<g class="g" stroke-width="1.3"><path d="M577.3 509V577.7H636M547.7 609.3H585V646.7M566.7 609.3V646.7M611 592.3H635V615H611ZM625 592.3V615"/><rect x="454.3" y="559.3" width="38.4" height="28.4"/><path d="M473.3 559.3V587.7"/><rect x="432.3" y="666" width="26.7" height="27.3"/><path d="M432.3 680H461M445.5 663V697"/></g>
<path d="M437 670H451M437 689H451" stroke="#00ec00" stroke-width="3.4"/>
<g fill="none" stroke="#00e0e0" stroke-width="1.4"><circle cx="464.3" cy="574" r="7.5"/><circle cx="483.3" cy="574" r="7.5"/></g><path d="M459.5 569L469 579M469 569L459.5 579M478.5 569L488 579M488 569L478.5 579" stroke="#00ec00" stroke-width="1.2"/>
<polygon points="694,434 689.6,444.6 679,449 668.4,444.6 664,434 668.4,423.4 679,419 689.6,423.4" fill="none" stroke="#fff" stroke-width="1.8"/>
<polygon points="688.5,469.3 685.7,476 679,478.8 672.3,476 669.5,469.3 672.3,462.6 679,459.8 685.7,462.6" fill="none" stroke="#fff" stroke-width="1.6"/><rect x="675" y="466" width="8" height="6.5" fill="none" stroke="#fff" stroke-width="1.6"/>
<path d="M636.5 468.5H650.5L667 443M573.3 583.3L591 608.3H605M465 588L500 613.5H515M484 588L500 613.5" stroke="#fff" fill="none"/>
<path d="M591 609H605M500 613.5H515M636.5 468.5H650" stroke="#fff" stroke-width="1.8"/>
<text class="n" x="642" y="467">2</text><text class="n" x="597.5" y="604">1</text><text class="n" x="506" y="610">6</text><text class="n" x="476.5" y="660">5</text>
<text class="h" x="528.5" y="456" font-size="26" textLength="78" lengthAdjust="spacingAndGlyphs">换热站房</text>

<!-- left dims -->
<g class="g" stroke-width="1.1"><path d="M365.7 405.7V701.7M354 406H372M354 701.7H372M387.7 478.3V695.3M385 478.3H412M385 626.7H420M385 695.3H412M401.7 558.3V626.7M399 558.3H416M399 587.7H420M399 626.7H420M428.3 545H496M428.3 540V556M454.3 540V556M493.3 540V556M429.3 736.7H640M429.3 713V750M498.3 733V742M548.7 713V750M636.7 733V752M424 773.3H705M424 761V783M704.3 761V783M658 504.3H700M658 500V508M698.7 412H724M698.7 486.7H724M722.7 411.7V486.7M546.7 526.7H565M547.7 522V531M565 522V531M624 526.7H640M636 522V531M630 646V660M655 656.7V696.7M636.7 656.7H658M520 500.7H556.7L562 507"/></g>
<g><use href="#tk" x="365.7" y="406"/><use href="#tk" x="365.7" y="701.7"/><use href="#tk" x="387.7" y="478.3"/><use href="#tk" x="387.7" y="626.7"/><use href="#tk" x="387.7" y="695.3"/><use href="#tk" x="401.7" y="558.3"/><use href="#tk" x="401.7" y="587.7"/><use href="#tk" x="401.7" y="626.7"/><use href="#tk" x="429" y="545"/><use href="#tk" x="454.3" y="545"/><use href="#tk" x="493.3" y="545"/><use href="#tk" x="429.3" y="736.7"/><use href="#tk" x="498.3" y="736.7"/><use href="#tk" x="548.7" y="736.7"/><use href="#tk" x="636.7" y="736.7"/><use href="#tk" x="424" y="773.3"/><use href="#tk" x="704.3" y="773.3"/><use href="#tk" x="658" y="504.3"/><use href="#tk" x="699" y="504.3"/><use href="#tk" x="722.7" y="412"/><use href="#tk" x="722.7" y="486.7"/><use href="#tk" x="655" y="657"/><use href="#tk" x="655" y="696"/></g>
<use href="#bub" x="344" y="406"/><text class="c" x="344" y="412">C</text><use href="#bub" x="344" y="701.7"/><text class="c" x="344" y="707.5">A</text>
<use href="#bub" x="424" y="793.3"/><text class="c" x="424" y="799.5">1</text><use href="#bub" x="704.3" y="793.3"/><text class="c" x="704.3" y="799.5">2</text>
<text class="d" transform="rotate(-90 361 554)" x="361" y="554">6000</text>
<text class="d" transform="rotate(-90 384 553)" x="384" y="553">3000</text><text class="d" transform="rotate(-90 384 662)" x="384" y="662">1400</text>
<text class="d" transform="rotate(-90 399 573)" x="399" y="573">575</text><text class="d" transform="rotate(-90 399 607)" x="399" y="607">800</text>
<text class="d" x="442" y="542">500</text><text class="d" x="474" y="542">760</text>
<text class="d" x="464" y="734">1400</text><text class="d" x="523" y="734">1000</text><text class="d" x="592" y="734">1800</text><text class="d" x="565" y="771">5700</text>
<text class="d" x="678" y="501">900</text><text class="d" transform="rotate(-90 720 449)" x="720" y="449">1500</text>
<text class="d" x="555" y="524" font-size="9">300</text><text class="d" x="630.7" y="524">200</text><text class="d" transform="rotate(-90 627 649)" x="627" y="649">220</text><text class="d" transform="rotate(-90 652 676)" x="652" y="676">800</text>
<text class="y" x="513" y="487">供水口 h=2494</text><text class="y" x="513" y="497">回水口 h=2174</text><text class="y" x="614" y="505">供水口 h=2020</text><text class="y" x="640" y="649">补水口 h=610</text>
<text class="s" x="606.7" y="546">水 箱</text>
<text class="s" x="557" y="628">循环泵</text><text class="s" x="576" y="628">循环泵</text>
<g class="s"><text class="s" x="618" y="600">补</text><text class="s" x="618" y="608">水</text><text class="s" x="618" y="615">泵</text><text class="s" x="630" y="600">补</text><text class="s" x="630" y="608">水</text><text class="s" x="630" y="615">泵</text></g>

<!-- RIGHT PLAN -->
<g class="w"><path d="M1103.3 400.7H979.3V707.3H1271.7V400.7H1207.3V412.3H1260.7V544.3H1253.3V562.3H1260.7V695.3H991.3V412.3H1103.3V400.7"/></g>
<path d="M1103.3 406.7L1129.3 361.7L1148.7 380.7L1155.7 406L1162.3 380.7L1181.7 361.7L1207.3 406.7" fill="none" stroke="#e0e000" stroke-width="1.3"/>
<g stroke="#e6e600" stroke-width="1.3" fill="none"><path d="M1011.7 401H1071.7M1011.7 404.8H1071.7M1011.7 408.6H1071.7M1011.7 412.2H1071.7M1260.5 483.3V527.7M1264.3 483.3V527.7M1268 483.3V527.7M1271.5 483.3V527.7"/></g>
<g class="g" stroke-width="1.3"><rect x="991.3" y="350.7" width="59.4" height="192"/><rect x="1016.3" y="558.3" width="38.7" height="29"/><path d="M1035.7 558.3V587.3M1139.3 508.3V577.3H1199M1109.3 609.3H1146.7V646.7H1109.3M1128.3 609.3V646.7M1173.3 615V592.7H1197.3M1186 592.7V615M1173.3 615"/><rect x="993.3" y="665.7" width="27.4" height="28.3"/><path d="M993 680H1023M1007 662V698"/></g>
<g class="g" stroke-width="2"><rect x="1109.3" y="508.3" width="89.7" height="147.7"/><rect x="1220.7" y="412.3" width="39.3" height="73.7"/><path d="M991.3 695.3V626.7H1060.7V695.3H991.3M1002 497V563M999 560V615.7H1205.5V648M1205.5 615.7"/></g>
<path d="M998 670H1012M998 689H1012" stroke="#00ec00" stroke-width="3.4"/>
<path d="M1001 596H1012M1001 609H1012" stroke="#00ec00" stroke-width="2.6"/><rect x="1001.5" y="596" width="6" height="13" fill="none" stroke="#fff"/>
<path d="M1006 350.7V487M1006 500V574H1056.5M1005 600V590H1053M1101.7 613V524H1109M1101.7 620V631.7H1061.7" fill="none" stroke="#e800e8" stroke-width="3"/>
<path d="M998.4 350.7V490H1125" fill="none" stroke="#f4f400" stroke-width="3.2"/>
<path d="M998 495H1124V508" fill="none" stroke="#e60000" stroke-width="4"/>
<path d="M1188.3 507V495H1216.7V470H1238" fill="none" stroke="#0000e6" stroke-width="2.4"/>
<path d="M1216.7 470V450.7H1241.7V416.7" fill="none" stroke="#fff" stroke-width="1.6"/>
<polygon points="1255.7,432.3 1251.3,442.9 1240.7,447.3 1230.1,442.9 1225.7,432.3 1230.1,421.7 1240.7,417.3 1251.3,421.7" fill="none" stroke="#fff" stroke-width="1.5"/>
<polygon points="1250,468.3 1247.3,474.9 1240.7,477.6 1234.1,474.9 1231.4,468.3 1234.1,461.7 1240.7,459 1247.3,461.7" fill="none" stroke="#fff" stroke-width="1.3"/><path d="M1238 466V473H1246" stroke="#fff" fill="none"/>
<path d="M1241 462V470H1222" stroke="#0000e6" stroke-width="2" fill="none" stroke-dasharray="5 3"/><path d="M1241 422V432" stroke="#00e0e0" stroke-width="3" stroke-dasharray="2 1"/>
<g fill="none" stroke="#00e0e0" stroke-width="1.4"><circle cx="1025.7" cy="574" r="7"/><circle cx="1045" cy="574" r="7"/></g><path d="M1006 574H1056" stroke="#e800e8" stroke-width="2.4"/>
<path d="M1025.7 581V587M1045 581V587" stroke="#fff" stroke-width="3"/>
<g fill="#fff"><circle cx="998.4" cy="424" r="2"/><circle cx="998.4" cy="449" r="2"/><circle cx="998.4" cy="476.5" r="2"/><circle cx="1125" cy="490" r="2.2"/><circle cx="1125" cy="495" r="2.2"/><circle cx="1125" cy="507" r="2"/><circle cx="1006" cy="538" r="2"/><circle cx="1006" cy="622" r="2"/><circle cx="1101.7" cy="524" r="2"/><circle cx="1065" cy="631.7" r="2.2"/><circle cx="1205" cy="646" r="2.2"/><circle cx="1188.3" cy="507" r="1.8"/><circle cx="1216.7" cy="470" r="2"/><circle cx="1241.7" cy="450.7" r="1.8"/></g>
<rect x="1101" y="498" width="6" height="7" fill="#00c0a0"/><rect x="1103" y="494" width="5" height="7" fill="none" stroke="#fff"/>
<g class="g" stroke-width="1.1"><path d="M960.7 406V701.7M948 406H967M948 701.7H967M985 772.7H1266.7M985 762V784M1266.5 762V784M966.7 392.7H998.3M1013 392.7H1029M1015 476H1048M1015 483H1048M1014.7 474V496M1226 497M1243.3 416.7L1276.7 428.3H1302.7M1195 522V531M1187 526.7H1202M1192 642V656"/><path stroke-width="1.6" d="M990 319H1015M995 315V338M1065 319H1091M1070 315V338M990 729H1015M995 712V735M1065 729H1091M1070 712V735M921.7 483.3H945.7M926.7 480V504M1284 483.3H1306.7M1304 480V504"/></g>
<use href="#tk" x="960.7" y="406"/><use href="#tk" x="960.7" y="701.7"/><use href="#tk" x="985" y="772.7"/><use href="#tk" x="1266.5" y="772.7"/>
<g><text class="c" style="font-size:20px;fill:#00ec00;font-weight:normal" x="1008" y="338">A</text><text class="c" style="font-size:20px;fill:#00ec00;font-weight:normal" x="1081.5" y="337">C</text><text class="c" style="font-size:20px;fill:#00ec00;font-weight:normal" x="1008" y="727">A</text><text class="c" style="font-size:20px;fill:#00ec00;font-weight:normal" x="1081.5" y="727">C</text><text class="c" style="font-size:20px;fill:#00ec00;font-weight:normal" x="939" y="502">B</text><text class="c" style="font-size:20px;fill:#00ec00;font-weight:normal" x="1293" y="502">B</text></g>
<use href="#bub" x="939.3" y="406"/><text class="c" x="939.3" y="412">C</text><use href="#bub" x="939.3" y="701.7"/><text class="c" x="939.3" y="707.5">A</text>
<use href="#bub" x="986" y="793.3"/><text class="c" x="986" y="799.5">1</text><use href="#bub" x="1266" y="793.3"/><text class="c" x="1266" y="799.5">2</text>
<text class="d" transform="rotate(-90 956 554)" x="956" y="554">6000</text><text class="d" x="1126" y="770">5700</text><text class="d" x="1193.5" y="524">200</text>
<text class="d" transform="rotate(-90 1189 649)" x="1189" y="649" style="font-size:9px">220</text>
<g><text class="s" transform="rotate(-90 972 375)" x="972" y="375">DN150(Z)</text><text class="s" transform="rotate(-90 980 375)" x="980" y="375">DN150(RD)</text><text class="s" transform="rotate(-90 1020 373)" x="1020" y="373">DN80(H)</text><text class="s" transform="rotate(-90 1028 373)" x="1028" y="373">DN150(RD)</text><text class="s" x="1031" y="475">DN150(Z)</text><text class="s" x="1031" y="483">DN150(RD)</text><text class="s" transform="rotate(-90 1014 522)" x="1014" y="522">DN80(H)</text><text class="s" transform="rotate(-90 997 573)" x="997" y="573">DN150(RD)</text><text class="s" transform="rotate(-90 1100 567)" x="1100" y="567">DN80(H)</text><text class="s" x="1202.7" y="492">DN50(r)</text><text class="s" transform="rotate(-90 1214 456)" x="1214" y="456">DN50(G)</text><text class="s" transform="rotate(-90 1238 437)" x="1238" y="437">DN50(G)</text></g>
<text class="s" x="1082" y="505">压力控制器</text><path d="M1065 507.5H1098" stroke="#fff"/><text class="s" x="1081" y="517.5">接软化水补水出水</text><path d="M1056 519H1105" stroke="#0df00d"/>
<text class="y" x="1279" y="426">软化水</text>
<text class="s" x="1172.7" y="546" style="font-size:8px">水 箱</text>
<text class="s" x="1119" y="628">循环泵</text><text class="s" x="1137.7" y="628">循环泵</text>
<text class="s" x="1180" y="600">补</text><text class="s" x="1180" y="608">水</text><text class="s" x="1180" y="615">泵</text><text class="s" x="1192" y="600">补</text><text class="s" x="1192" y="608">水</text><text class="s" x="1192" y="615">泵</text>
<text class="h" x="1118" y="451" font-size="26" textLength="78" lengthAdjust="spacingAndGlyphs">换热站房</text>

<!-- plan titles -->
<text class="h" x="605" y="861" font-size="20" style="font-weight:700" textLength="157" lengthAdjust="spacingAndGlyphs">换热站设备布置平面图</text>
<rect x="520" y="868" width="168" height="3.4" fill="#e60000"/><rect x="520" y="873.5" width="168" height="1.5" fill="#00e8e8"/>
<text class="h" x="1163.5" y="861" font-size="20" style="font-weight:700" textLength="157" lengthAdjust="spacingAndGlyphs">换热站工艺管线平面图</text>
<rect x="1079" y="868" width="168" height="3.4" fill="#e60000"/><rect x="1079" y="873.5" width="168" height="1.5" fill="#00e8e8"/>

<!-- north arrow -->
<polygon points="1435.3,267.7 1457,273.5 1473.5,289.5 1479.3,311.7 1473.5,333.7 1457,349.8 1435.3,355.7 1413.3,349.8 1397.2,333.7 1391.3,311.7 1397.2,289.5 1413.3,273.5" fill="none" stroke="#0be60b" stroke-width="1.1"/>
<path d="M1435.3 266L1441 356H1429Z" fill="#00ee00"/>
<text class="h" x="1436.7" y="256" font-size="21">北</text>

<!-- title block -->
<g fill="none" stroke="#fff" stroke-width="1.7"><rect x="961" y="1066.7" width="590.5" height="98.3"/><path d="M961 1096H1551.5M961 1113.3H1231.3M961 1131H1231.3M961 1148.3H1231.3M1465 1082.3H1551.5M1465 1113.3H1551.5M1465 1131H1551.5M1465 1148.3H1551.5M1231.3 1121H1465M1008.3 1096V1165M1045.3 1096V1165M1096.7 1096V1165M1143.7 1096V1165M1180.3 1096V1165M1231.3 1066.7V1165M1465 1066.7V1165M1501.7 1066.7V1165"/></g>
<g><text class="t" x="985" y="1110">审　定</text><text class="t" x="985" y="1127">项目负责人</text><text class="t" x="985" y="1144">工种负责人</text><text class="t" x="1120" y="1110">审　核</text><text class="t" x="1120" y="1127">校　对</text><text class="t" x="1120" y="1144">设　计</text><text class="t" x="1120" y="1161">制　图</text>
<text class="t" x="1256" y="1087">工程名称：</text><text class="t" x="1256" y="1112">单项名称：</text>
<text class="t" x="1483.5" y="1079">阶　段</text><text class="t" x="1483.5" y="1093">专　业</text><text class="t" x="1483.5" y="1109">图　号</text><text class="t" x="1483.5" y="1127">版　次</text><text class="t" x="1483.5" y="1144">比　例</text><text class="t" x="1483.5" y="1161">日　期</text>
<text class="t" x="1526.5" y="1079">施工图</text><text class="t" x="1526.5" y="1093">动力</text><text class="t" x="1526.5" y="1110" style="font-size:10px">6</text><text class="t" x="1526.5" y="1127" style="font-size:10px">A</text><text class="t" x="1526.5" y="1144" style="font-size:10px">1:50</text><text class="t" x="1526.5" y="1160" style="font-size:10px">2005.6</text>
<text class="h" x="1358" y="1113" font-size="17" textLength="82" lengthAdjust="spacingAndGlyphs">换热站、水泵房</text>
<text class="h" x="1340" y="1139" font-size="16" textLength="146" lengthAdjust="spacingAndGlyphs">换热站设备布置平面图及</text>
<text class="h" x="1338" y="1159" font-size="16" textLength="93" lengthAdjust="spacingAndGlyphs">工艺管线平面图</text></g>

<!-- crosshair & ucs -->
<path d="M1614.5 133V1217M1614.5 1230V1237M33 1223.5H1608M1621 1223.5H1695" stroke="#fff" stroke-width="1"/>
<rect x="1608.5" y="1217.5" width="12.5" height="12" fill="none" stroke="#fff" stroke-width="1.1"/>
<path d="M60 1161V1210.5M60 1210.5H109" stroke="#fff"/><rect x="55.5" y="1206" width="9" height="9" fill="none" stroke="#fff"/>
<text class="u" x="67" y="1156">Y</text><text class="u" x="120" y="1209">X</text>

<!-- compass (over crosshair) -->
<circle cx="1613.3" cy="215.7" r="54.5" fill="none" stroke="#4b5058" stroke-width="11"/>
<path d="M1551.5 186V245" stroke="#00b8b8" stroke-width="3" opacity=".55"/>
<path d="M1575.5 180V250" stroke="#00c8c8" stroke-width="1.2" opacity=".5"/>
<rect x="1586.7" y="189.3" width="51" height="51.7" fill="#b2b7bc"/>
<rect x="1596" y="199" width="33" height="32" fill="#a2a7ad"/>
<path d="M1610 204V225M1598 225H1627M1611 211H1624" stroke="#53585e" stroke-width="2.6"/>
<path d="M1614.5 189V241" stroke="#7d8186"/>
<g font-size="18" fill="#878b91" text-anchor="middle" style="font-family:'Noto Serif CJK SC',serif"><text x="1612.3" y="167" style="font-family:inherit">北</text><text x="1612.3" y="281" style="font-family:inherit">南</text><text x="1555" y="223" style="font-family:inherit">西</text><text x="1667.3" y="223" style="font-family:inherit">东</text></g>
<rect x="1588.3" y="303.3" width="47.4" height="17.4" rx="4" fill="#8d919d"/><text x="1592" y="316" font-size="11.5" fill="#555960">WCS</text><path d="M1625 310H1631L1628 313Z" fill="#aaaeb6"/><path d="M1614.5 303V321" stroke="#c8cad0"/>

<!-- command -->
<rect x="29" y="1240" width="1697" height="29" fill="#c8c8c8"/>
<rect x="29" y="1270" width="1697" height="24" fill="#fff"/>
<path d="M8 1246H25" stroke="#d6dade" stroke-width="3" stroke-dasharray="1.5 1"/>
<path d="M11 1254L19 1262M19 1254L11 1262" stroke="#e6e8ea" stroke-width="2.2"/>
<path d="M9 1291L17 1282M14 1276L20 1276L22 1281L17 1284Z" stroke="#dfe2e5" stroke-width="2.4" fill="#dfe2e5"/>
<text x="32" y="1262" font-size="17.5" fill="#222" style="font-family:'Liberation Mono','Noto Sans CJK SC',monospace">选择注释对象或 [放弃(U)/模式(M)]: *取消*</text>
<rect x="33" y="1276" width="16" height="13" fill="#eee" stroke="#666"/><rect x="33" y="1276" width="16" height="3" fill="#666"/><path d="M35 1282L38 1284L35 1286M39 1287H43" stroke="#444" fill="none"/><path d="M51 1281H57L54 1285Z" fill="#666"/>
<text x="66" y="1288" font-size="18" font-style="italic" fill="#9a9a9a">键入命令</text>

<!-- model tabs -->
<path d="M15 1295H56C60 1295 58 1312 62 1313H22C18 1312 19 1295 15 1295Z" fill="#3a4451"/>
<path d="M66 1313C70 1312 68 1295 72 1295H126C130 1295 128 1312 122 1313Z" fill="#2e3743"/>
<path d="M136 1313C140 1312 138 1295 142 1295H155L153 1313Z" fill="#2e3743"/>
<text x="27" y="1309" font-size="13" fill="#f0f1f3" font-weight="bold">模型</text>
<text x="75" y="1309" font-size="12.5" fill="#aeb3b9">Layout1</text>
<path d="M141 1304H149M145 1300V1308" stroke="#c5c9cd" stroke-width="1.8"/>

<!-- status bar -->
<g fill="#39424e"><rect x="1151" y="1297" width="30" height="23"/><rect x="1184" y="1297" width="65" height="23"/><rect x="1252" y="1297" width="105" height="23"/><rect x="1356" y="1297" width="68" height="23"/><rect x="1427" y="1297" width="19" height="23"/><rect x="1449" y="1297" width="114" height="23"/><rect x="1557" y="1297" width="63" height="23"/><rect x="1624" y="1297" width="24" height="23"/><rect x="1652" y="1297" width="24" height="23"/><rect x="1677" y="1297" width="49" height="23"/></g>
<g fill="#5b94cb"><rect x="1252" y="1297" width="22" height="23"/><rect x="1381" y="1297" width="22" height="23"/><rect x="1449" y="1297" width="22" height="23"/></g>
<text x="1153" y="1314" font-size="13" fill="#e6e8ea">模型</text>
<path d="M1189 1301V1316M1195 1301V1316M1201 1301V1316M1188 1304H1203M1188 1309H1203M1188 1314H1203" stroke="#c9cdd2" fill="none"/>
<path d="M1214 1304H1226M1214 1309H1226M1214 1314H1226" stroke="#c9cdd2" stroke-width="2" stroke-dasharray="2 4"/>
<use href="#dd" x="1240" y="1308"/>
<path d="M1256 1302V1316H1271M1256 1310H1262V1316" stroke="#fff" stroke-width="1.4" fill="none"/>
<circle cx="1285" cy="1310" r="6.5" fill="none" stroke="#c9cdd2"/><path d="M1281 1310H1296M1285 1310L1294 1302" stroke="#c9cdd2"/><use href="#dd" x="1307" y="1308"/>
<path d="M1320 1302L1332 1316" stroke="#c26ab0"/><path d="M1326 1300V1318" stroke="#62c47a"/><rect x="1324.5" y="1307" width="3" height="3" fill="#d8d8d8"/><use href="#dd" x="1347" y="1308"/>
<path d="M1361 1316H1376M1361 1316L1373 1303" stroke="#c9cdd2" stroke-width="1.2"/>
<path d="M1386 1304V1316H1400V1302H1389" stroke="#fff" fill="none" stroke-width="1.4"/><rect x="1384" y="1300" width="4" height="4" fill="none" stroke="#fff"/><use href="#dd" x="1412" y="1308"/>
<path d="M1425 1302H1441M1425 1307H1436M1425 1312H1437" stroke="#c9cdd2" stroke-width="2"/><path d="M1425 1316H1432" stroke="#c9cdd2" stroke-width="3"/>
<use href="#sm" x="1458" y="1310"/><circle cx="1466" cy="1303" r="3" fill="none" stroke="#fff"/>
<use href="#sm" x="1483" y="1310"/><path d="M1491 1300L1487 1307H1491L1489 1312" stroke="#c9cdd2" fill="none"/>
<use href="#sm" x="1508" y="1310"/>
<text x="1525" y="1314" font-size="12" fill="#d0d3d7">1:1</text><use href="#dd" x="1546" y="1308"/>
<circle cx="1568" cy="1308.5" r="5" fill="none" stroke="#c9cdd2" stroke-width="3.2"/><circle cx="1568" cy="1308.5" r="7.8" fill="none" stroke="#c9cdd2" stroke-width="2" stroke-dasharray="3 3"/><use href="#dd" x="1588" y="1308"/>
<path d="M1601 1309H1618M1609.5 1301V1317" stroke="#d6dade" stroke-width="1.6"/>
<rect x="1629" y="1300" width="6" height="6" fill="none" stroke="#c9cdd2"/><circle cx="1642" cy="1307" r="3" fill="none" stroke="#c9cdd2"/><path d="M1636 1309L1632 1316H1640Z" fill="none" stroke="#c9cdd2"/>
<circle cx="1662" cy="1306" r="6" fill="#4e84c4"/><rect x="1655" y="1309" width="7" height="7" fill="#eec24a"/><path d="M1661 1313L1665 1317L1671 1309" stroke="#6bbd69" stroke-width="2.2" fill="none"/><path d="M1662 1300V1312M1656 1303H1668" stroke="#fff"/>
<rect x="1681" y="1302" width="15" height="13" fill="none" stroke="#c9cdd2"/><path d="M1684 1312L1688 1308M1692 1305L1689 1308M1684 1309V1312H1687M1690 1305H1693V1308" stroke="#c9cdd2" fill="none"/>
<path d="M1705 1302H1721M1705 1309H1721M1705 1316H1721" stroke="#d6dade" stroke-width="2"/>
</svg>
</body></html>
